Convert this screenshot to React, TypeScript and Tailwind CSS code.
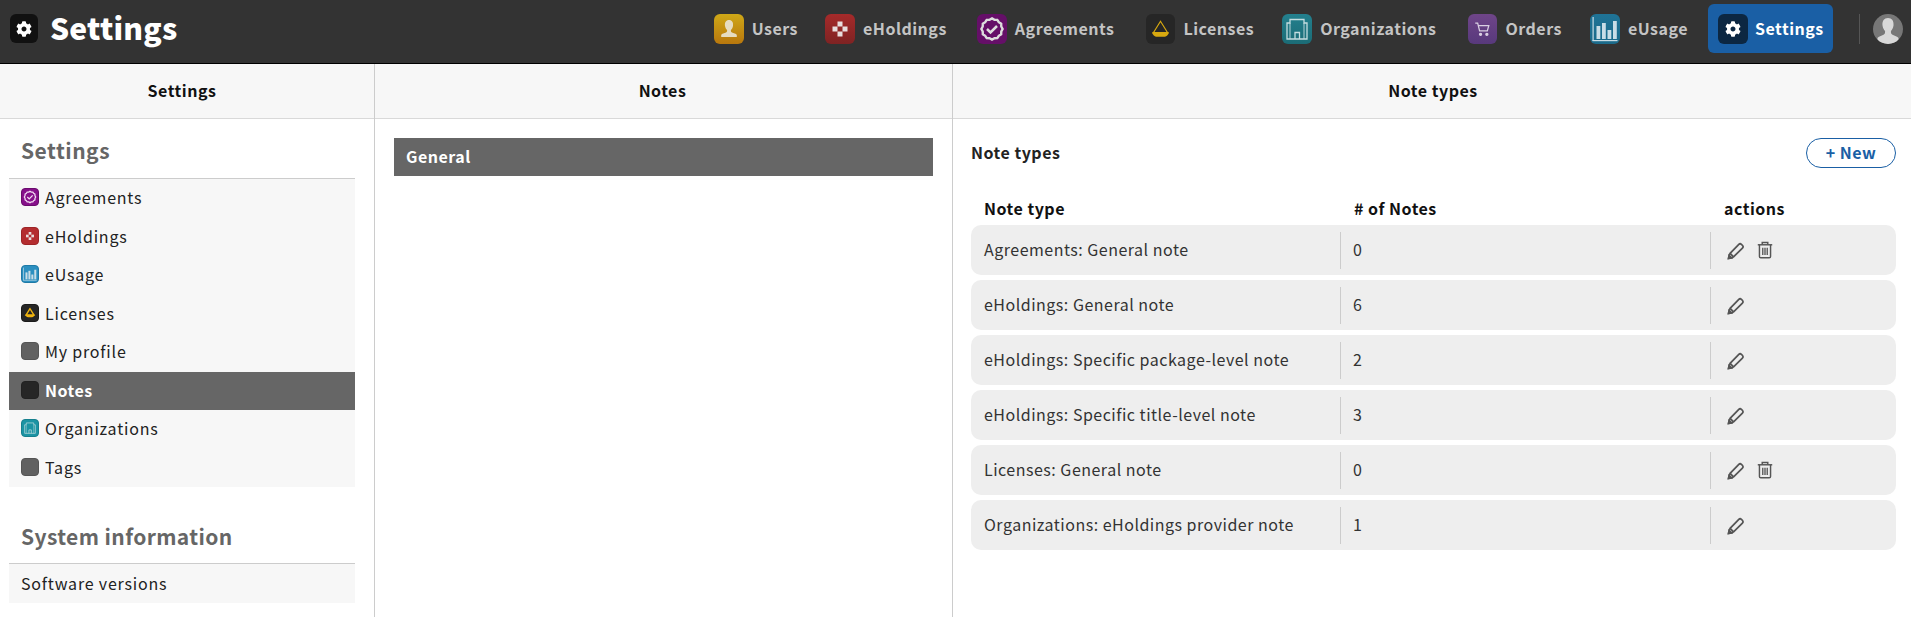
import { FaCog } from 'react-icons/fa'

const font = '[font-family:"Noto_Sans_CJK_SC","Liberation_Sans",sans-serif]'

function UsersIcon() {
  return (
    <svg viewBox="0 0 30 30" className="w-full h-full">
      <path d="M15 6c-3 0-4.500 2.500-4 6 .3 2 1.300 3.200 2 4 .3 1 0 2-1 2.500-1.500.6-4.300 1-4.800 2.500v2h15.600v-2c-.5-1.500-3.300-1.900-4.800-2.500-1-.5-1.300-1.500-1-2.500.7-.8 1.700-2 2-4 .5-3.500-1-6-4-6z" fill="#e6dcc0" />
    </svg>
  )
}

function HoldingsIcon() {
  return (
    <svg viewBox="0 0 30 30" className="w-full h-full" fill="#e8dede">
      <rect x="12.500" y="7.500" width="5" height="5" />
      <rect x="7.500" y="12.500" width="5" height="5" />
      <rect x="17.500" y="12.500" width="5" height="5" />
      <rect x="12.500" y="17.500" width="5" height="5" />
    </svg>
  )
}

// scalloped badge outline, 12 lobes
const badgePoints = Array.from({ length: 24 }, (_, i) => {
  const r = i % 2 === 0 ? 10.6 : 9.6
  const a = (i * Math.PI) / 12
  return `${(15 + r * Math.sin(a)).toFixed(2)},${(15 - r * Math.cos(a)).toFixed(2)}`
}).join(' ')

function AgreementsIcon({ color = '#ddd' }: { color?: string }) {
  return (
    <svg viewBox="0 0 30 30" className="w-full h-full" fill="none" stroke={color}>
      <polygon points={badgePoints} strokeWidth="2.400" />
      <path d="M10 15l3.500 3.500 6.500-6.500" strokeWidth="2.500" />
    </svg>
  )
}

function LicensesIcon({ stroke = '#d8a90f', sw = 1.2 }: { stroke?: string; sw?: number }) {
  return (
    <svg viewBox="0 0 30 30" className="w-full h-full" fill="none">
      <path d="M15 7L7.500 19h15z" stroke={stroke} strokeWidth={sw} />
      <path d="M6.500 18h17c0 3-2.500 5-5 5h-7c-2.500 0-5-2-5-5z" fill={stroke} />
    </svg>
  )
}

function OrgIcon() {
  return (
    <svg viewBox="0 0 30 30" className="w-full h-full" fill="none" stroke="#c4dde0" strokeWidth="1.300">
      <path d="M5 25V9h3V5.500h14V9h3v16z" />
      <path d="M8 9v16M22 9v16" strokeWidth="0.900" />
      <path d="M13 25v-6.500h4.500V25" />
    </svg>
  )
}

function OrdersIcon() {
  return (
    <svg viewBox="0 0 30 30" className="w-full h-full" fill="none" stroke="#d9cfe2" strokeWidth="1.300">
      <path d="M7.500 9h2.500l2 8h8l1.500-5.500H10.800" />
      <circle cx="13" cy="20.500" r="1.100" fill="#d9cfe2" />
      <circle cx="19.500" cy="20.500" r="1.100" fill="#d9cfe2" />
    </svg>
  )
}

function UsageIcon() {
  return (
    <svg viewBox="0 0 30 30" className="w-full h-full" fill="#c9dde6">
      <rect x="2.500" y="3" width="1.200" height="24" />
      <rect x="2.500" y="26" width="25" height="1.200" />
      <rect x="6.500" y="12" width="3.800" height="13" />
      <rect x="12" y="9" width="3.800" height="16" />
      <rect x="17.500" y="16" width="3.800" height="9" />
      <rect x="23" y="7" width="3.800" height="18" />
    </svg>
  )
}

const navItems = [
  { label: 'Users', width: 'w-[30px]', bg: 'bg-gradient-to-b from-[#cfa817] to-[#b8770d]', icon: <UsersIcon />, ml: 'ml-0' },
  { label: 'eHoldings', width: 'w-[30px]', bg: 'bg-gradient-to-b from-[#a62a2a] to-[#7f2323]', icon: <HoldingsIcon />, ml: 'ml-[7px]' },
  { label: 'Agreements', width: 'w-[30px]', bg: 'bg-[#650f68]', icon: <AgreementsIcon />, ml: 'ml-[10px]' },
  { label: 'Licenses', width: 'w-[29px]', bg: 'bg-[#262626]', icon: <LicensesIcon />, ml: 'ml-[12px]' },
  { label: 'Organizations', width: 'w-[30px]', bg: 'bg-gradient-to-b from-[#23808e] to-[#1b6c76]', icon: <OrgIcon />, ml: 'ml-[8px]' },
  { label: 'Orders', width: 'w-[29px]', bg: 'bg-gradient-to-b from-[#6f4589] to-[#58397c]', icon: <OrdersIcon />, ml: 'ml-[12px]' },
  { label: 'eUsage', width: 'w-[30px]', bg: 'bg-gradient-to-b from-[#1f7396] to-[#1b6a8a]', icon: <UsageIcon />, ml: 'ml-[8px]' },
]

function SideIcon({ name }: { name: string }) {
  const base = 'w-[18px] h-[18px] rounded-[4px] shrink-0 overflow-hidden border '
  if (name === 'Agreements')
    return <span className={base + 'bg-[#86108a] border-[#6b0c6e]'}><AgreementsIcon color="#f0d8f0" /></span>
  if (name === 'eHoldings')
    return <span className={base + 'bg-[#b42d2f] border-[#9d2527]'}><HoldingsIcon /></span>
  if (name === 'eUsage')
    return <span className={base + 'bg-[#2b8fc0] border-[#1f7aa6]'}><UsageIcon /></span>
  if (name === 'Licenses')
    return <span className={base + 'bg-[#262626] border-[#1b1b1b]'}><LicensesIcon stroke="#f0b40f" sw={2.6} /></span>
  if (name === 'Organizations')
    return <span className={base + 'bg-[#1c94a4] border-[#16808e]'}><OrgIcon /></span>
  if (name === 'Notes')
    return <span className={base + 'bg-[#262626] border-[#222]'} />
  return <span className={base + 'bg-[#616161] border-[#555]'} />
}

const sideItems = ['Agreements', 'eHoldings', 'eUsage', 'Licenses', 'My profile', 'Notes', 'Organizations', 'Tags']

const rows = [
  { name: 'Agreements: General note', count: 0, del: true },
  { name: 'eHoldings: General note', count: 6, del: false },
  { name: 'eHoldings: Specific package-level note', count: 2, del: false },
  { name: 'eHoldings: Specific title-level note', count: 3, del: false },
  { name: 'Licenses: General note', count: 0, del: true },
  { name: 'Organizations: eHoldings provider note', count: 1, del: false },
]

function PencilIcon() {
  return (
    <svg viewBox="0 0 18 18" className="w-[21px] h-[21px]" fill="none" stroke="#555" strokeWidth="1.500">
      <path d="M2.200 15.800c.2-1.800.6-3.300 1.300-4.300l7.500-7.700c.7-.7 1.500-.7 2.200-.1l1 1c.6.700.6 1.500-.1 2.200l-7.600 7.500c-1 .7-2.500 1.200-4.300 1.400z" />
      <path d="M3.500 11.500l3 3" />
      <path d="M2.200 15.800l2.500-.5-2-2z" fill="#555" />
    </svg>
  )
}

function TrashIcon() {
  return (
    <svg viewBox="0 0 18 18" className="w-[20px] h-[20px]" fill="none" stroke="#555" strokeWidth="1.300">
      <path d="M2.500 4.300h13" />
      <path d="M6.500 4V2.200h5V4" />
      <path d="M4 4.500v10.300c0 .7.500 1.200 1.200 1.200h7.600c.7 0 1.200-.5 1.200-1.200V4.500" />
      <path d="M7 7v6.500M9 7v6.500M11 7v6.500" strokeWidth="1.200" />
    </svg>
  )
}

function PaneHeader({ title, className = '' }: { title: string; className?: string }) {
  return (
    <div className={`h-[55px] pb-[2px] bg-[#f7f7f7] border-b border-[#d9d9d9] flex items-center justify-center text-[16px] font-bold tracking-[0.5px] text-[#111] ${className}`}>
      {title}
    </div>
  )
}

export default function App() {
  return (
    <div className={`w-[1911px] h-[617px] overflow-hidden flex flex-col bg-white ${font}`}>
      <header className="h-[64px] shrink-0 bg-[#333] border-b border-black">
        <div className="h-[57px] flex items-center pl-[10px]">
          <span className="w-[28px] h-[29px] rounded-[6px] bg-[#111] flex items-center justify-center text-white text-[16px]">
            <FaCog />
          </span>
          <span className="ml-[12px] pb-[2px] text-[30px] font-black text-white tracking-[0.2px]">Settings</span>
          <nav className="ml-auto flex items-center h-full text-[16px] font-bold tracking-[0.5px] text-[#c4c4c4]">
            {navItems.map((item) => (
              <a key={item.label} className={`flex items-center gap-[8px] px-[10px] h-[49px] ${item.ml}`}>
                <span className={`${item.width} h-[30px] rounded-[6px] overflow-hidden ${item.bg}`}>{item.icon}</span>
                <span className="pb-[2px]">{item.label}</span>
              </a>
            ))}
            <a className="flex items-center gap-[7px] pl-[10px] pr-[9px] h-[49px] w-[125px] ml-[10px] rounded-[6px] bg-[#1a5fa5] text-white">
              <span className="w-[30px] h-[30px] rounded-[6px] bg-[#0c2742] flex items-center justify-center text-[16px]">
                <FaCog />
              </span>
              <span className="pb-[2px]">Settings</span>
            </a>
          </nav>
          <div className="w-px h-[30px] bg-[#555] ml-[26px]" />
          <div className="w-[30px] h-[30px] rounded-full bg-[#777] ml-[13px] mr-[8px] overflow-hidden">
            <svg viewBox="0 0 30 30" className="w-full h-full">
              <path d="M15 4c-4 0-6 3-5.500 7.500.3 2.500 1.500 4.500 2.500 5.500.3 1.500 0 3-1.500 3.800-2 1-5 1.700-6 3.200V30h21v-6c-1-1.500-4-2.200-6-3.200-1.500-.8-1.800-2.300-1.500-3.800 1-1 2.200-3 2.500-5.500C21 7 19 4 15 4z" fill="#d8d8d8" />
            </svg>
          </div>
        </div>
      </header>

      <div className="flex-1 flex min-h-0 text-[16px] tracking-[0.8px] text-[#222]">
        <section className="w-[375px] shrink-0 border-r border-[#ccc]">
          <PaneHeader title="Settings" className="pr-[10px]" />
          <div className="pl-[9px] pr-[19px]">
            <h3 className="h-[59px] pl-[12px] pt-[15px] text-[21px] font-bold text-[#666] tracking-[0.5px] leading-[32px]">Settings</h3>
            <ul className="border-t border-[#ccc] bg-[#f7f7f7]">
              {sideItems.map((name) => (
                <li
                  key={name}
                  className={`h-[38.500px] pb-[2px] flex items-center gap-[6px] pl-[12px] ${name === 'Notes' ? 'bg-[#666] text-white font-bold tracking-[0.5px]' : ''}`}
                >
                  <SideIcon name={name} />
                  {name}
                </li>
              ))}
            </ul>
            <h3 className="h-[76px] pl-[12px] pt-[33px] text-[21px] font-bold text-[#666] tracking-[0.4px] leading-[32px]">System information</h3>
            <div className="h-[40px] pb-[2px] border-t border-[#ccc] bg-[#f7f7f7] flex items-center pl-[12px]">Software versions</div>
          </div>
        </section>

        <section className="w-[578px] shrink-0 border-r border-[#ccc]">
          <PaneHeader title="Notes" className="pr-[2px]" />
          <div className="pt-[19px] pl-[19px] pr-[19px]">
            <div className="h-[38px] pb-[2px] bg-[#666] text-white font-bold tracking-[0.5px] flex items-center pl-[12px]">General</div>
          </div>
        </section>

        <section className="flex-1 min-w-0 tracking-[0.5px]">
          <PaneHeader title="Note types" className="pl-[2px]" />
          <div className="pl-[18px] pr-[15px]">
            <div className="h-[30px] mt-[19px] flex items-center justify-between">
              <span className="font-bold pb-[2px]">Note types</span>
              <button className="w-[90px] h-[30px] pb-[2px] rounded-full border border-[#1a5fa5] text-[#1a5fa5] font-bold flex items-center justify-center">
                + New
              </button>
            </div>
            <div className="flex h-[30px] pb-[4px] mt-[27px] items-center font-bold text-[#111]">
              <span className="w-[383px] pl-[13px]">Note type</span>
              <span className="w-[370px]">
                # of Notes
              </span>
              <span>actions</span>
            </div>
            <div className="flex flex-col gap-[5px]">
              {rows.map((row) => (
                <div key={row.name} className="h-[50px] rounded-[10px] bg-[#eee] flex items-center text-[#333]">
                  <span className="w-[370px] pl-[13px] h-[37px] pb-[2px] flex items-center border-r border-[#ccc]">{row.name}</span>
                  <span className="w-[370px] pl-[12px] h-[37px] pb-[2px] flex items-center border-r border-[#ccc]">{row.count}</span>
                  <span className="pl-[15px] flex items-center gap-[8px]">
                    <PencilIcon />
                    {row.del && <TrashIcon />}
                  </span>
                </div>
              ))}
            </div>
          </div>
        </section>
      </div>
    </div>
  )
}
